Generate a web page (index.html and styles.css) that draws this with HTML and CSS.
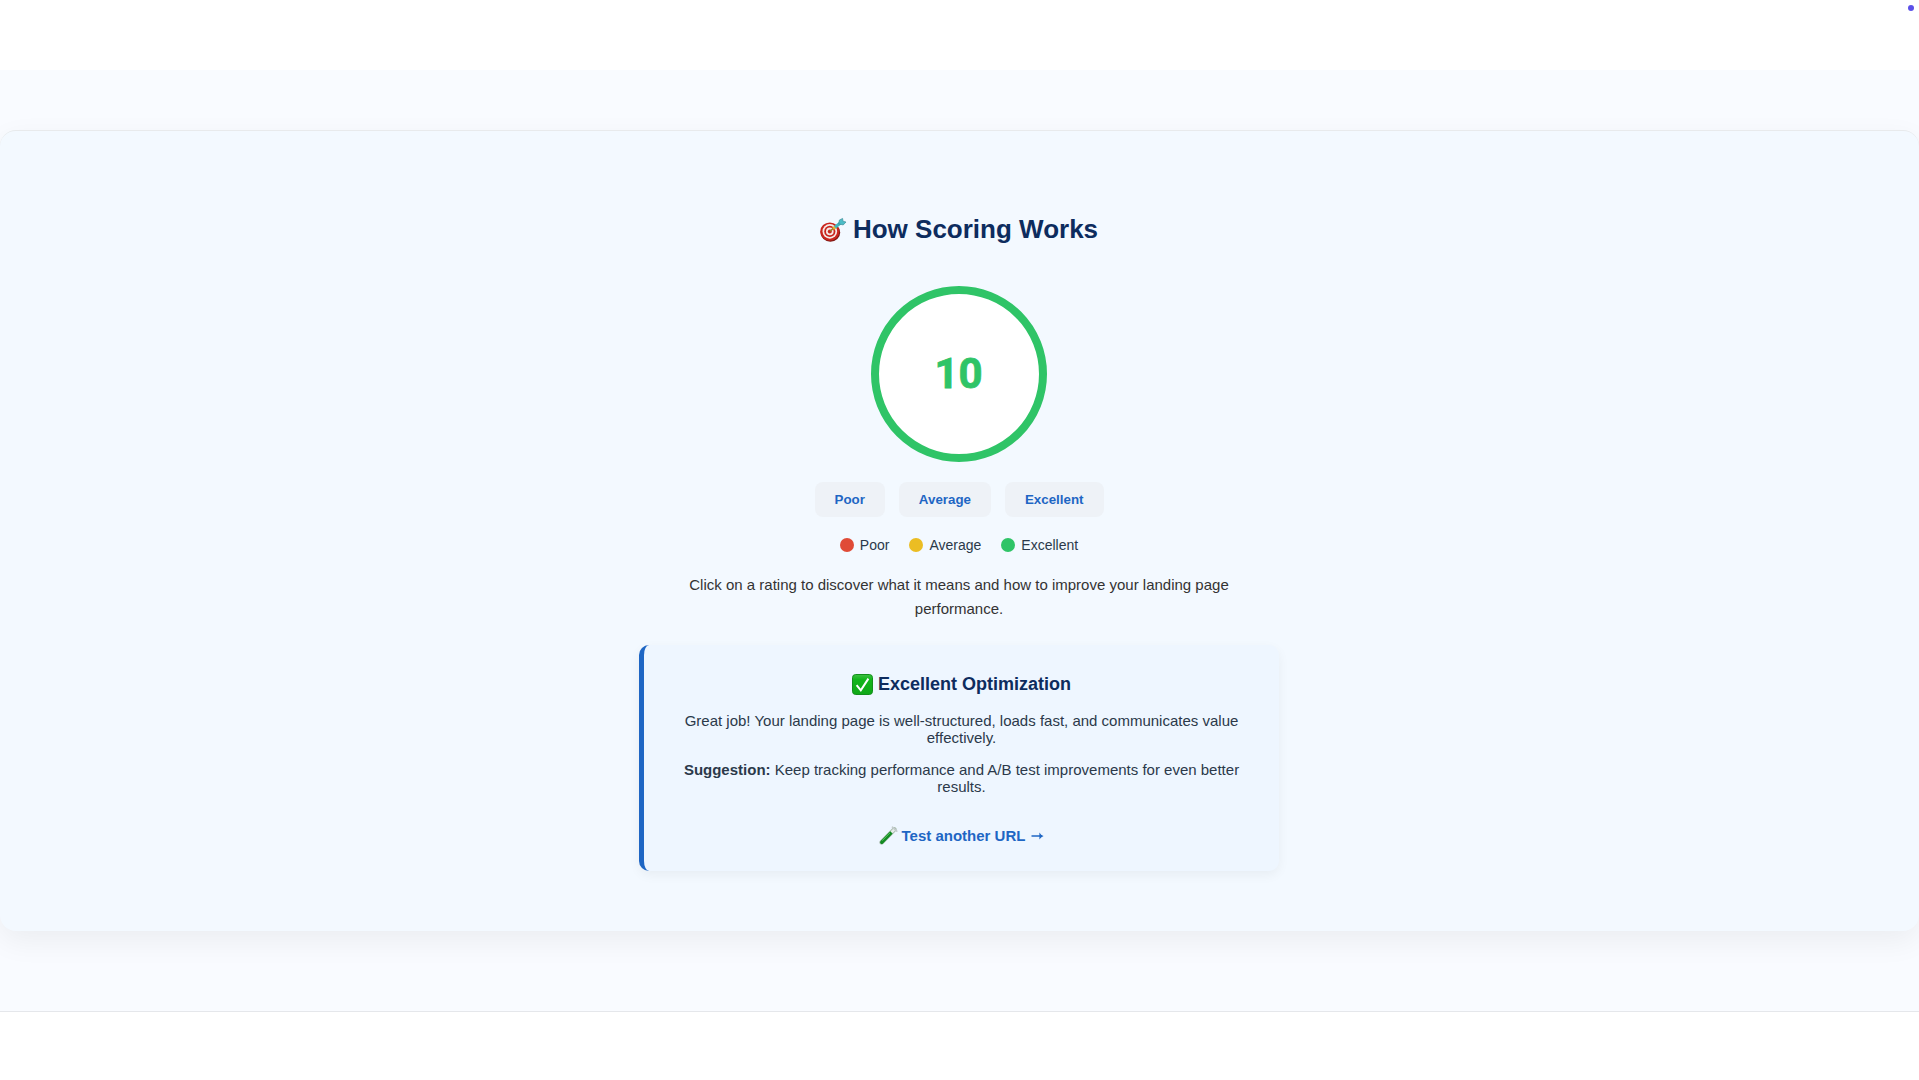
FILE: index.html
```html
<!DOCTYPE html>
<html lang="en">
<head>
  <meta charset="UTF-8">
  <meta name="viewport" content="width=device-width, initial-scale=1.0">
  <title>How Scoring Works</title>
  <link rel="stylesheet" href="styles.css">
</head>
<body>
  <header class="topbar"><span class="status-dot"></span></header>

  <main class="page">
    <section class="scoring">
      <h2 class="scoring-title">
        <svg class="icon-target" viewBox="0 0 28 28">
          <ellipse cx="11.4" cy="17.6" rx="9.8" ry="9.2" fill="#7d1712"/>
          <ellipse cx="10.8" cy="16.6" rx="9.6" ry="9.2" fill="#c9251d"/>
          <circle cx="10.8" cy="16.4" r="7.3" fill="#f6e9e6"/>
          <circle cx="10.8" cy="16.4" r="5.6" fill="#c9251d"/>
          <circle cx="10.8" cy="16.4" r="3.8" fill="#f6e9e6"/>
          <circle cx="10.8" cy="16.4" r="2" fill="#c9251d"/>
          <path d="M11 16.2 15.5 12.5" stroke="#9c7a22" stroke-width="1.6"/>
          <path d="M14.2 13.7 16.4 11.8" stroke="#e3b22f" stroke-width="3"/>
          <path d="M16 12.2 22 7.6" stroke="#3fb3bd" stroke-width="3.2"/>
          <path d="M19.6 8.8 20.4 5 23.6 3.4 24 6.2 27 7 24.2 10Z" fill="#4cbcc6" stroke="#34858e" stroke-width=".6"/>
        </svg>
        How Scoring Works
      </h2>

      <div class="score-circle">10</div>

      <div class="rating-buttons">
        <button class="rating-btn">Poor</button>
        <button class="rating-btn">Average</button>
        <button class="rating-btn">Excellent</button>
      </div>

      <div class="legend">
        <span class="legend-item"><i class="dot poor"></i>Poor</span>
        <span class="legend-item"><i class="dot average"></i>Average</span>
        <span class="legend-item"><i class="dot excellent"></i>Excellent</span>
      </div>

      <p class="scoring-text">Click on a rating to discover what it means and how to improve your landing page performance.</p>

      <div class="rating-detail">
        <h3 class="detail-title">
          <svg class="icon-check" viewBox="0 0 21 21">
            <defs>
              <linearGradient id="check-bg" x1="0" y1="0" x2="0" y2="1">
                <stop offset="0" stop-color="#3fc044"/>
                <stop offset=".25" stop-color="#12b51b"/>
                <stop offset="1" stop-color="#10a818"/>
              </linearGradient>
            </defs>
            <rect x=".5" y=".5" width="20" height="20" rx="3.2" fill="url(#check-bg)" stroke="#128f1b"/>
            <path d="M4.6 11.2 8.8 16.4 16.4 4.6" fill="none" stroke="#fff" stroke-width="2"/>
          </svg>
          Excellent Optimization
        </h3>
        <p>Great job! Your landing page is well-structured, loads fast, and communicates value effectively.</p>
        <p><strong>Suggestion:</strong> Keep tracking performance and A/B test improvements for even better results.</p>
        <a class="detail-link" href="#">
          <svg class="icon-tube" viewBox="0 0 19 19">
            <path d="M2.6 16.4 15.4 3.4" stroke="#a9bcae" stroke-width="4.4" stroke-linecap="round"/>
            <path d="M2.8 16.2 11.8 7" stroke="#128a22" stroke-width="3.4" stroke-linecap="round"/>
            <path d="M3.2 14.6 11 6.8" stroke="#5fd066" stroke-width=".9"/>
            <path d="M12.4 6.4 15.4 3.4" stroke="#e6ecea" stroke-width="2.6"/>
            <path d="M13.4 1.2 17.8 5.2" stroke="#c3cbcc" stroke-width="1.6" stroke-linecap="round"/>
          </svg>
          Test another URL
          <svg class="icon-arrow" viewBox="0 0 13 10">
            <path d="M.5 5H11" stroke="currentColor" stroke-width="1.5"/>
            <path d="M8.4 1.4Q9.8 4 12.6 5 9.8 6 8.4 8.6Z" fill="currentColor"/>
          </svg>
        </a>
      </div>
    </section>
  </main>
</body>
</html>
```

FILE: styles.css
```css
* {
  box-sizing: border-box;
}
body {
  margin: 0;
  background: #fff;
  color: #2b394a;
  font-family: Helvetica, "Liberation Sans", Arial, sans-serif;
  overflow: hidden;
}
.topbar {
  height: 70px;
  padding: 5px 5px 0 0;
  display: flex;
  justify-content: flex-end;
}
.status-dot {
  width: 6px;
  height: 6px;
  border-radius: 50%;
  background: #5b50e8;
}
.page {
  height: 942px;
  padding-top: 60px;
  background: #f9fbff;
  border-bottom: 1px solid #e5e7eb;
}
.scoring {
  height: 801px;
  padding: 83px 21px 0 20px;
  background: #f3f9ff;
  border-top: 1px solid #e8eaec;
  border-radius: 16px;
  box-shadow: 0 10px 30px rgba(0, 0, 0, 0.06);
  text-align: center;
}
.scoring-title {
  display: flex;
  justify-content: center;
  align-items: center;
  gap: 6px;
  height: 30px;
  margin: 0 0 42px;
  padding-right: 1px;
  font-size: 26px;
  color: #0d2c5e;
}
.icon-target {
  width: 28px;
  height: 28px;
}
.score-circle {
  display: flex;
  align-items: center;
  justify-content: center;
  width: 176px;
  height: 176px;
  margin: 0 auto 20px;
  padding: 0 1px 2px 0;
  border: 8px solid #2fc467;
  border-radius: 50%;
  background: #fff;
  color: #2fc467;
  font-family: Roboto, sans-serif;
  font-size: 42px;
  font-weight: 700;
  -webkit-text-stroke: 0.8px #2fc467;
}
.rating-buttons {
  display: flex;
  justify-content: center;
  gap: 14px;
  margin-bottom: 20px;
}
.rating-btn {
  height: 35px;
  padding: 0 20px;
  border: none;
  border-radius: 8px;
  background: #eef2f7;
  color: #1e66c4;
  font-family: inherit;
  font-size: 13.33px;
  font-weight: 700;
  cursor: pointer;
}
.legend {
  display: flex;
  justify-content: center;
  gap: 20px;
  font-size: 14px;
  line-height: 16px;
}
.legend-item {
  display: flex;
  align-items: center;
  gap: 6px;
}
.dot {
  width: 14px;
  height: 14px;
  border-radius: 50%;
}
.dot.poor {
  background: #e04b37;
}
.dot.average {
  background: #ebbd23;
}
.dot.excellent {
  background: #2fc467;
}
.scoring-text {
  max-width: 600px;
  margin: 20px auto 24px;
  font-size: 15px;
  line-height: 24px;
  color: #333;
}
.rating-detail {
  width: 640px;
  height: 226px;
  margin: 0 auto;
  padding: 29px 30px 0;
  border-left: 5px solid #1e66c4;
  border-radius: 10px;
  background: #eef6ff;
  box-shadow: 0 4px 12px rgba(0, 0, 0, 0.05);
  font-size: 15px;
  line-height: 17px;
}
.detail-title {
  display: flex;
  justify-content: center;
  align-items: center;
  gap: 5px;
  height: 21px;
  margin: 0 0 17px;
  font-size: 18px;
  color: #0d2c5e;
}
.icon-check {
  width: 21px;
  height: 21px;
}
.rating-detail p {
  margin: 0 0 15px;
}
.detail-link {
  display: inline-flex;
  align-items: center;
  gap: 4px;
  margin-top: 16px;
  color: #1e66c4;
  font-weight: 700;
  text-decoration: none;
}
.icon-tube {
  width: 19px;
  height: 19px;
}
.icon-arrow {
  width: 13px;
  height: 10px;
  margin-left: 2px;
}
```
